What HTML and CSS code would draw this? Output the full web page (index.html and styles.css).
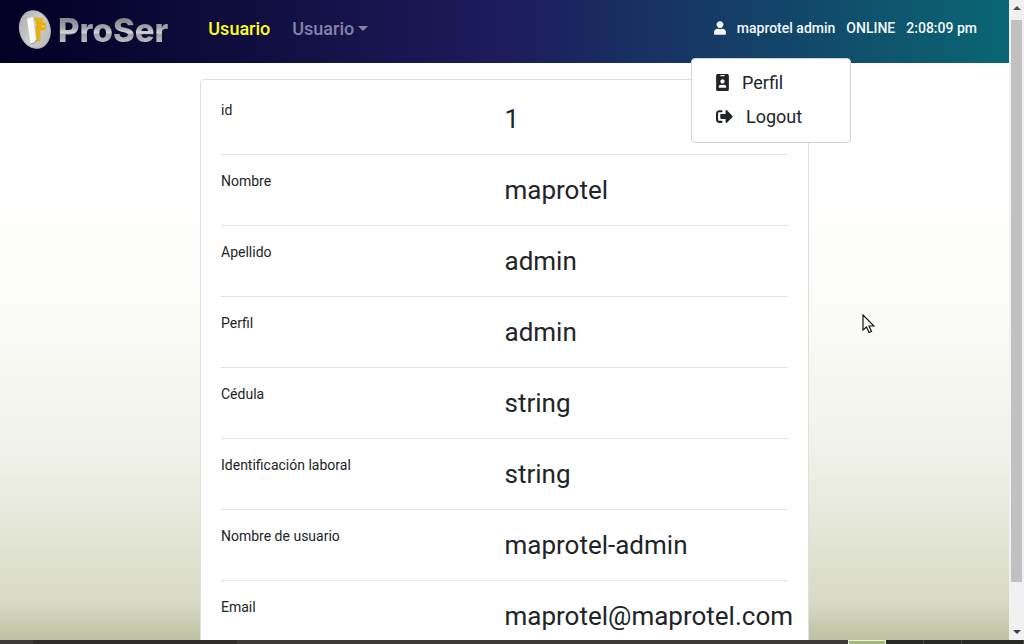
FILE: index.html
```html
<!DOCTYPE html>
<html lang="es">
<head>
<meta charset="utf-8">
<title>ProSer - Usuario</title>
<link rel="stylesheet" href="styles.css">
</head>
<body>
<div class="screen">
  <div class="window">
    <div class="page">
      <header class="navbar">
        <a class="brand" href="#">
          <svg class="brand-mark" viewBox="0 0 34 40" aria-hidden="true">
            <defs>
              <linearGradient id="disc" x1="0" y1="0" x2="1" y2="1">
                <stop offset="0" stop-color="#a9a9ad"/>
                <stop offset=".5" stop-color="#cfcfd1"/>
                <stop offset="1" stop-color="#b4b4b8"/>
              </linearGradient>
            </defs>
            <ellipse cx="17" cy="19.500" rx="15.200" ry="19" transform="rotate(-14 17 20)" fill="url(#disc)" stroke="#b5b5ba"/>
            <path d="M9 8.500l6-1.500 3 23-1.500 2.500-4 1z" fill="#fafafa"/>
            <path d="M16 7.500l9 .5.500 4.500 2.500.5-.5 7-5 .5v10l-4 1.500-1-14 1-3z" fill="#e5b010"/>
            <path d="M12.500 34l4-1 1.500-3" fill="none" stroke="#85858a" stroke-width=".8"/>
            <path d="M23 16l4 .5" stroke="#f3dc8a"/>
          </svg>
          <span class="brand-name">ProSer</span>
        </a>
        <nav class="menu">
          <a class="menu-link active" href="#">Usuario</a>
          <button class="menu-link toggle" type="button">Usuario</button>
        </nav>
        <div class="session">
          <button class="account" type="button">
            <svg class="account-icon" viewBox="0 0 448 512" aria-hidden="true"><path fill="currentColor" d="M224 256c70.700 0 128-57.300 128-128S294.700 0 224 0 96 57.300 96 128s57.300 128 128 128zm90 32h-17c-45 21-101 21-146 0h-17C60 288 0 348 0 422v42c0 27 21 48 48 48h352c27 0 48-21 48-48v-42c0-74-60-134-134-134z"/></svg>
            <span>maprotel admin</span>
          </button>
          <span>ONLINE</span>
          <span>2:08:09 pm</span>
          <div class="dropdown">
            <a class="dropdown-item" href="#">
              <svg class="badge-icon" viewBox="0 0 384 512" aria-hidden="true"><path fill="currentColor" d="M336 0H48C21.500 0 0 21.500 0 48v416c0 26.500 21.500 48 48 48h288c26.500 0 48-21.500 48-48V48c0-26.500-21.500-48-48-48zM144 32h96c9 0 16 7 16 16s-7 16-16 16h-96c-9 0-16-7-16-16s7-16 16-16zm48 128c35 0 64 29 64 64s-29 64-64 64-64-29-64-64 29-64 64-64zm112 237c0 11-10 19-22 19H102c-12 0-22-8-22-19v-19c0-32 30-58 67-58h5c25 11 55 11 80 0h5c37 0 67 26 67 58z"/></svg>
              <span>Perfil</span>
            </a>
            <a class="dropdown-item" href="#">
              <svg class="logout-icon" viewBox="0 0 512 512" aria-hidden="true"><path fill="currentColor" d="M497 273L329 441c-15 15-41 4.500-41-17v-96H152c-13 0-24-11-24-24v-96c0-13 11-24 24-24h136V88c0-21.400 25.900-32 41-17l168 168c9.300 9.400 9.300 24.600 0 34zM192 436v-40c0-6.600-5.400-12-12-12H96c-17.700 0-32-14.300-32-32V160c0-17.700 14.300-32 32-32h84c6.600 0 12-5.400 12-12V76c0-6.600-5.400-12-12-12H96c-53 0-96 43-96 96v192c0 53 43 96 96 96h84c6.600 0 12-5.400 12-12z"/></svg>
              <span>Logout</span>
            </a>
          </div>
        </div>
      </header>
      <main class="content">
        <dl class="card">
          <div class="row"><dt>id</dt><dd>1</dd></div>
          <div class="row"><dt>Nombre</dt><dd>maprotel</dd></div>
          <div class="row"><dt>Apellido</dt><dd>admin</dd></div>
          <div class="row"><dt>Perfil</dt><dd>admin</dd></div>
          <div class="row"><dt>Cédula</dt><dd>string</dd></div>
          <div class="row"><dt>Identificación laboral</dt><dd>string</dd></div>
          <div class="row"><dt>Nombre de usuario</dt><dd>maprotel-admin</dd></div>
          <div class="row"><dt>Email</dt><dd>maprotel@maprotel.com</dd></div>
        </dl>
      </main>
    </div>
    <div class="scrollbar" aria-hidden="true">
      <span class="arrow up"></span>
      <span class="track"><span class="thumb"></span></span>
      <span class="arrow down"></span>
    </div>
  </div>
  <footer class="taskbar" aria-hidden="true">
    <span class="task-start"></span>
    <span class="task-window"></span>
    <span class="task-space"></span>
    <span class="workspace current"></span>
    <span class="workspace"></span>
    <span class="workspace"></span>
    <span class="workspace"></span>
  </footer>
  <svg class="pointer" viewBox="0 0 13 20" aria-hidden="true"><path d="M1 1v15l3.500-3 2.500 5.500 2.500-1-2.500-5.500H12z" fill="#fff" stroke="#111" stroke-width="1.200"/></svg>
</div>
</body>
</html>
```
FILE: styles.css
```css
* {
  box-sizing: border-box;
}

body {
  margin: 0;
  font-family: Roboto, "Liberation Sans", sans-serif;
  color: #212529;
}

a {
  color: inherit;
  text-decoration: none;
}

button {
  padding: 0;
  border: 0;
  background: none;
  color: inherit;
  font: inherit;
  cursor: pointer;
}

.screen {
  position: relative;
  display: flex;
  flex-direction: column;
  height: 100vh;
  overflow: hidden;
}

.window {
  display: flex;
  flex: 1;
  min-height: 0;
}

.page {
  flex: 1;
  min-width: 0;
  overflow: hidden;
  background: linear-gradient(#fff 30%, #fbfbf8 48%, #f1f2ea 70%, #dfe1cf 88%, #d8dac5 94%, #bfc1a4);
}

.navbar {
  display: flex;
  align-items: center;
  padding: 8px 32px 8px 18px;
  min-height: 63px;
  background: linear-gradient(to right, #020024, #1d1c5c 50%, #0a6674);
}

.brand {
  display: flex;
  align-items: center;
  gap: 6px;
  margin-bottom: 4px;
}

.brand-mark {
  width: 34px;
  height: 40px;
}

.brand-name {
  background: linear-gradient(#85858c 20%, #a4a4aa 45%, #d2d2d6 56%, #a0a0a6 62%, #c4c4ca 85%);
  background-clip: text;
  color: transparent;
  font: 800 33px/40px Inter, sans-serif;
}

.menu {
  display: flex;
  gap: 22px;
  margin: 0 auto 6px 40px;
  font-size: 18px;
  font-weight: 500;
  line-height: 28px;
}

.menu-link {
  color: #8482aa;
}

.menu-link.active {
  color: #ffff20;
}

.toggle {
  display: flex;
  align-items: center;
  gap: 4px;
}

.toggle::after {
  content: "";
  border: 5px solid transparent;
  border-top-color: currentColor;
  border-bottom: 0;
}

.session {
  position: relative;
  display: flex;
  gap: 11px;
  margin-bottom: 8px;
  color: #f4f7fa;
  font-size: 14px;
  font-weight: 500;
  line-height: 20px;
}

.account {
  display: flex;
  align-items: center;
  gap: 11px;
}

.account-icon {
  width: 12px;
  height: 14px;
}

.dropdown {
  position: absolute;
  top: 40px;
  right: 126px;
  width: 160px;
  padding: 7px 0 8px;
  border: 1px solid #d4d4d4;
  border-radius: 4px;
  background: #fff;
  color: #212529;
  font-size: 18px;
  font-weight: 400;
}

.dropdown-item {
  display: flex;
  align-items: center;
  gap: 13px;
  padding: 3px 24px;
  line-height: 28px;
}

.badge-icon {
  width: 13px;
  height: 17px;
}

.logout-icon {
  width: 17px;
  height: 17px;
}

.content {
  padding: 16px;
}

.card {
  width: 100%;
  max-width: 609px;
  margin: 0 auto;
  padding: 4px 20px 20px;
  border: 1px solid #dfdfdf;
  border-radius: 4px;
  background: #fff;
}

.row {
  display: grid;
  grid-template-columns: repeat(2, minmax(0, 1fr));
  padding: 16px 0;
  border-bottom: 1px solid #e3e3e3;
}

.row:last-child {
  border-bottom: 0;
}

.row dt {
  font-size: 14px;
  line-height: 20px;
}

.row dd {
  margin: 0;
  font-size: 26px;
  line-height: 38px;
}

.scrollbar {
  display: flex;
  flex-direction: column;
  width: 15px;
  background: #f1f1f1;
}

.arrow {
  display: grid;
  place-items: center;
  height: 16px;
}

.arrow::before {
  content: "";
  border: 4px solid transparent;
}

.up::before {
  border-top: 0;
  border-bottom-color: #505050;
}

.down::before {
  border-bottom: 0;
  border-top-color: #404040;
}

.track {
  flex: 1;
  padding: 4px 2px 0;
}

.thumb {
  display: block;
  height: 93%;
  background: #c1c1c1;
}

.taskbar {
  display: flex;
  height: 4px;
  background: #3c3b37;
}

.task-start {
  width: 33px;
}

.task-window {
  width: 204px;
  background: #302e2d;
}

.task-space {
  flex: 1;
}

.workspace {
  width: 38px;
  border-right: 1px solid #454440;
  background: #292a27;
}

.workspace:last-child {
  width: 62px;
}

.current {
  border: 1px solid #e9f0dc;
  border-bottom: 0;
  background: #a3b77b;
}

.pointer {
  position: absolute;
  top: 314px;
  left: 862px;
  width: 13px;
  height: 20px;
}
```
